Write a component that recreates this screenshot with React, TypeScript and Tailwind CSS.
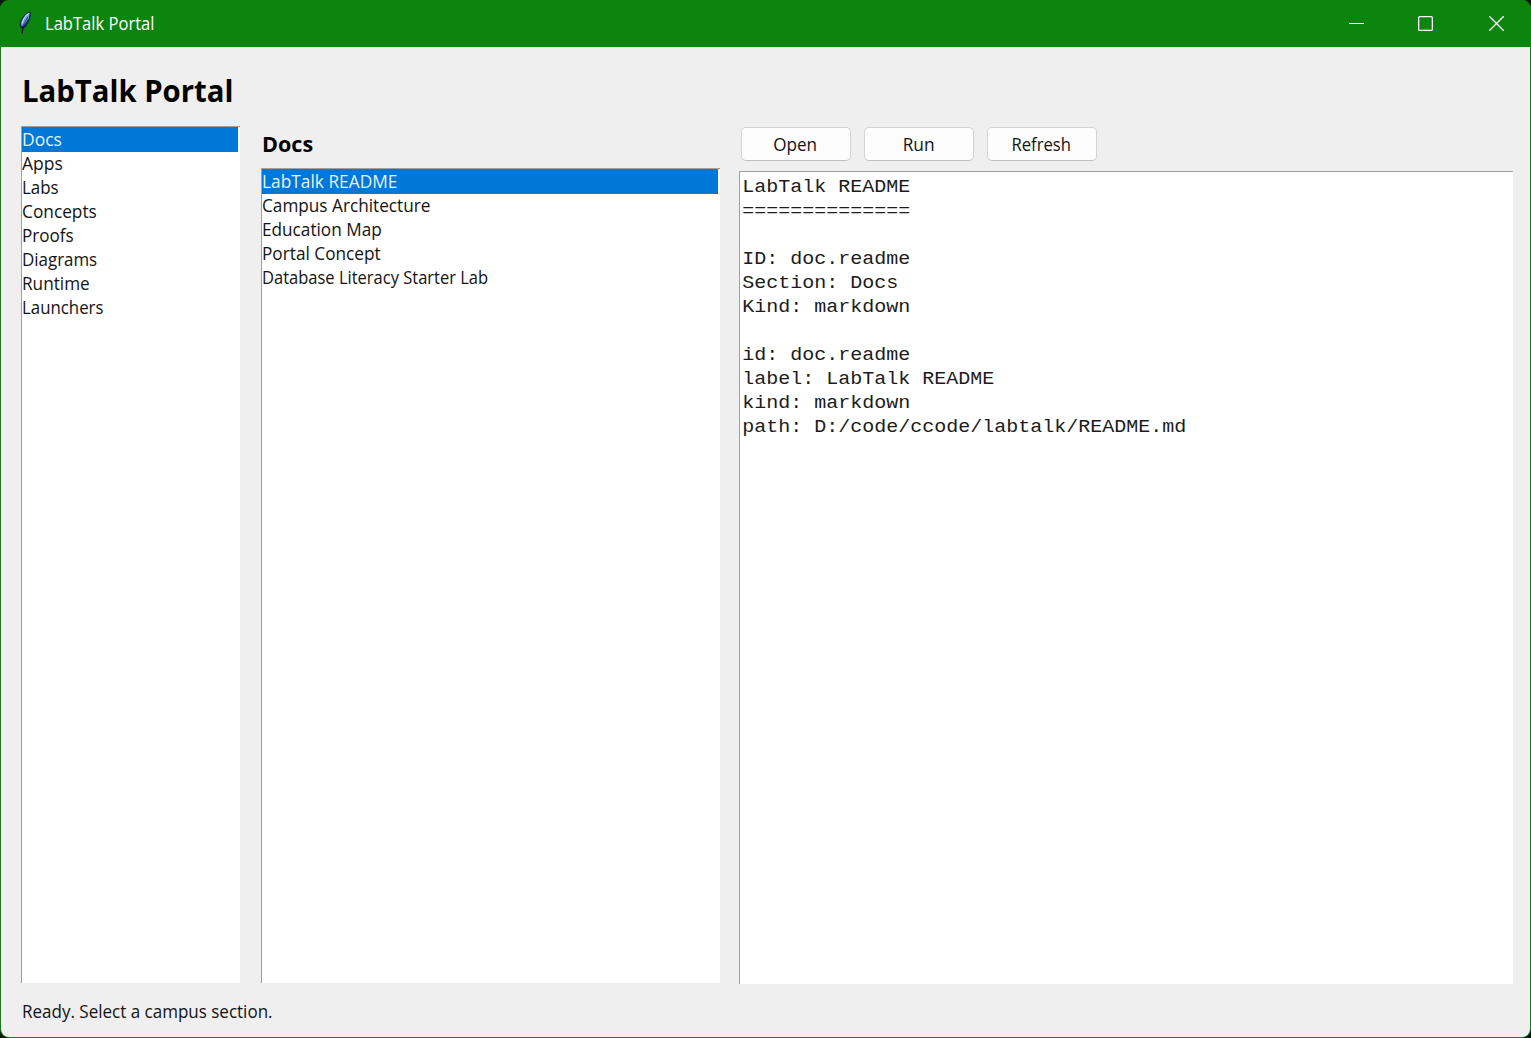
import type { ReactNode } from 'react';

type Item = { label: string; fit: string };

const sections: Item[] = [
  { label: 'Docs', fit: 'scale-x-[0.97]' },
  { label: 'Apps', fit: 'scale-x-[0.97]' },
  { label: 'Labs', fit: 'scale-x-[0.94]' },
  { label: 'Concepts', fit: 'scale-x-[0.96]' },
  { label: 'Proofs', fit: 'scale-x-[0.95]' },
  { label: 'Diagrams', fit: 'scale-x-[0.94]' },
  { label: 'Runtime', fit: 'scale-x-[0.955]' },
  { label: 'Launchers', fit: 'scale-x-[0.935]' },
];

const docs: Item[] = [
  { label: 'LabTalk README', fit: 'scale-x-[0.962]' },
  { label: 'Campus Architecture', fit: 'scale-x-[0.955]' },
  { label: 'Education Map', fit: 'scale-x-[0.955]' },
  { label: 'Portal Concept', fit: 'scale-x-[0.957]' },
  { label: 'Database Literacy Starter Lab', fit: 'scale-x-[0.917]' },
];

const actions: Item[] = [
  { label: 'Open', fit: 'scale-x-[0.95]' },
  { label: 'Run', fit: 'scale-x-[0.96]' },
  { label: 'Refresh', fit: 'scale-x-[0.925]' },
];

const preview = `LabTalk README
==============

ID: doc.readme
Section: Docs
Kind: markdown

id: doc.readme
label: LabTalk README
kind: markdown
path: D:/code/ccode/labtalk/README.md`;

function Sunken({ className, children }: { className: string; children: ReactNode }) {
  return (
    <div className={`border-t border-l border-[#a0a0a0] bg-white pr-0.5 pb-0.5 ${className}`}>{children}</div>
  );
}

function ListBox({ items, className }: { items: Item[]; className: string }) {
  return (
    <Sunken className={className}>
      <ul>
        {items.map((item, i) => (
          <li
            key={item.label}
            className={
              i === 0
                ? 'flex h-[25px] items-start bg-[#0078d7] text-[#e6f3fd]'
                : 'flex h-6 items-start pb-px text-[#141414] *:-mt-px'
            }
          >
            <span className={`origin-left whitespace-nowrap ${item.fit}`}>{item.label}</span>
          </li>
        ))}
      </ul>
    </Sunken>
  );
}

function Feather() {
  return (
    <svg width="14" height="24" viewBox="0 0 14 24" fill="none">
      <path d="M12.500.5 9 1.500 5 5.500 2.300 10 1.500 14 2.500 17 5 18 8.500 15 11.300 10 13 4Z" fill="#14284a" />
      <path d="M11.800 1.800 9.200 2.600 5.900 6.200 3.500 10.500 2.800 14.200 4.500 15.500 7.700 12 10.700 7.500Z" fill="#5f97d8" />
      <path d="M11 2.500 8.200 4.500 5.500 8.500 4 12.500" stroke="#bcd8f4" strokeWidth="1.300" />
      <path d="M10 6 7 11 4.800 15.500" stroke="#1b3560" strokeWidth=".8" />
      <path d="M4.800 15.500 4.200 22.500" stroke="#0a1424" strokeWidth="1.400" />
    </svg>
  );
}

function TitleBar() {
  return (
    <header className="flex h-[47px] shrink-0 items-center bg-[#0c850f] pb-px text-white">
      <div className="flex flex-1 items-center pl-[18px]">
        <Feather />
        <span className="ml-[13px] origin-left scale-x-[0.92] text-[18px] whitespace-nowrap">LabTalk Portal</span>
      </div>
      <svg className="mr-[53px]" width="16" height="16" viewBox="0 0 16 16" stroke="white">
        <path d="M1 8.500H16" />
      </svg>
      <svg className="mr-[55px]" width="16" height="16" viewBox="0 0 16 16" fill="none" stroke="white" strokeWidth="1.300">
        <rect x="1.650" y="1.650" width="13.700" height="13.700" rx="1.200" />
      </svg>
      <svg className="mr-[27px]" width="16" height="16" viewBox="0 0 16 16" stroke="white" strokeWidth="1.300">
        <path d="M1.300 1.300 15.700 15.700M15.700 1.300 1.300 15.700" />
      </svg>
    </header>
  );
}

export default function App() {
  return (
    <div className="h-[1038px] w-[1531px] bg-[#0a1a08] font-['Open_Sans',sans-serif] text-[18px] leading-6">
      <div className="flex h-full flex-col overflow-hidden rounded-[9px] bg-[#1c7a1e]">
        <TitleBar />
        <div className="mx-px mb-px flex flex-1 flex-col rounded-b-[8px] bg-[#efefef]">
          <h1 className="flex h-[79px] shrink-0 items-center pt-[7px] pl-[21px] text-[31px] font-bold text-black">
            <span className="origin-left scale-x-[0.945] whitespace-nowrap">LabTalk Portal</span>
          </h1>
          <main className="flex h-[858px] shrink-0 pl-5">
            <ListBox items={sections} className="h-[857px] w-[219px]" />
            <section className="ml-[21px] flex h-[857px] w-[459px] flex-col">
              <h2 className="flex h-[42px] items-center pb-2 pl-px text-[22px] font-bold text-black">
                <span className="origin-left scale-x-[0.98]">Docs</span>
              </h2>
              <ListBox items={docs} className="flex-1" />
            </section>
            <section className="ml-[19px] flex w-[774px] flex-col">
              <div className="flex h-[45px] gap-[13px] pt-px pl-0.5">
                {actions.map((a) => (
                  <button
                    key={a.label}
                    className="flex h-[34px] w-[110px] items-center justify-center rounded-[5px] border border-[#d3d3d3] border-b-[#c0c0c0] bg-[#fdfdfd] pr-px text-[#141414]"
                  >
                    <span className={a.fit}>{a.label}</span>
                  </button>
                ))}
              </div>
              <Sunken className="flex-1">
                <pre className="w-[680px] origin-left scale-x-[1.111] pt-[3px] pl-[2px] font-['Liberation_Mono',monospace] text-[18px] leading-6 text-[#1c1c1c]">
                  {preview}
                </pre>
              </Sunken>
            </section>
          </main>
          <footer className="flex flex-1 items-center pl-[21px] text-[#141414]">
            <span className="origin-left scale-x-[0.945] whitespace-nowrap">Ready. Select a campus section.</span>
          </footer>
        </div>
      </div>
    </div>
  );
}
